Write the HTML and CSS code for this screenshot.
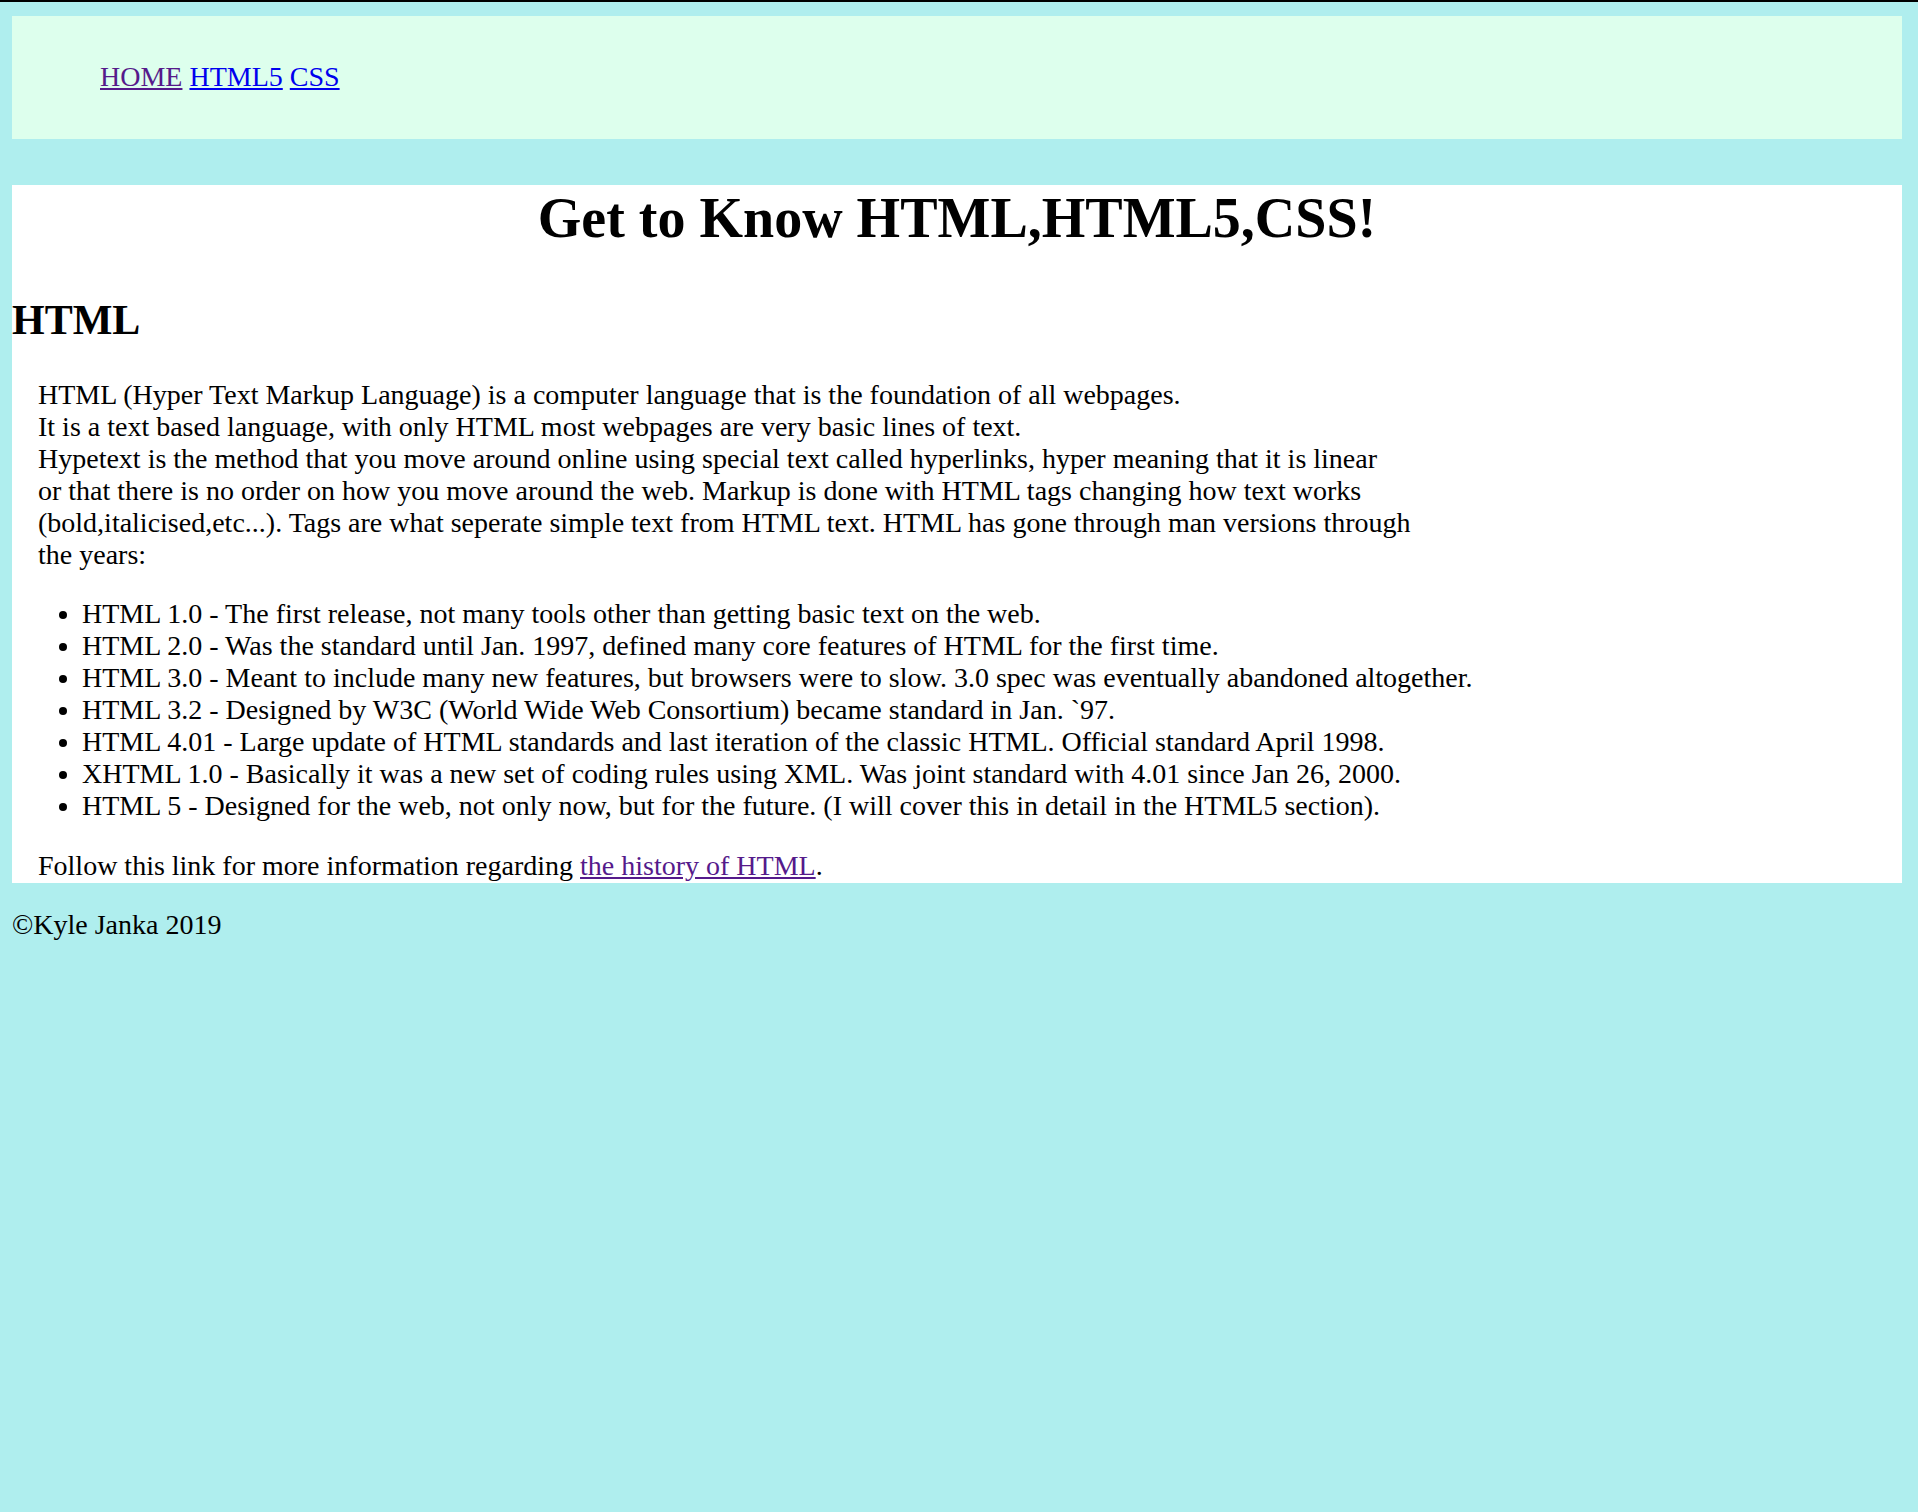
FILE: index.html
```html
<!DOCTYPE html>
<html>
<head>
<meta charset="utf-8">
<title>Get to Know HTML</title>
<link rel="stylesheet" href="styles.css">
</head>
<body>
<div class="page">
  <header class="top">
    <nav class="nav"><a class="visited" href="#">HOME</a> <a href="#">HTML5</a> <a href="#">CSS</a></nav>
  </header>
  <main class="main">
    <h1 class="title">Get to Know HTML,HTML5,CSS!</h1>
    <h2 class="section">HTML</h2>
    <p class="text">HTML (Hyper Text Markup Language) is a computer language that is the foundation of all webpages.<br>
    It is a text based language, with only HTML most webpages are very basic lines of text.<br>
    Hypetext is the method that you move around online using special text called hyperlinks, hyper meaning that it is linear<br>
    or that there is no order on how you move around the web. Markup is done with HTML tags changing how text works<br>
    (bold,italicised,etc...). Tags are what seperate simple text from HTML text. HTML has gone through man versions through<br>
    the years:</p>
    <ul class="list">
      <li>HTML 1.0 - The first release, not many tools other than getting basic text on the web.</li>
      <li>HTML 2.0 - Was the standard until Jan. 1997, defined many core features of HTML for the first time.</li>
      <li>HTML 3.0 - Meant to include many new features, but browsers were to slow. 3.0 spec was eventually abandoned altogether.</li>
      <li>HTML 3.2 - Designed by W3C (World Wide Web Consortium) became standard in Jan. `97.</li>
      <li>HTML 4.01 - Large update of HTML standards and last iteration of the classic HTML. Official standard April 1998.</li>
      <li>XHTML 1.0 - Basically it was a new set of coding rules using XML. Was joint standard with 4.01 since Jan 26, 2000.</li>
      <li>HTML 5 - Designed for the web, not only now, but for the future. (I will cover this in detail in the HTML5 section).</li>
    </ul>
    <p class="text follow">Follow this link for more information regarding <a class="visited" href="#">the history of HTML</a>.</p>
  </main>
  <footer class="foot">&copy;Kyle Janka 2019</footer>
</div>
</body>
</html>
```
FILE: styles.css
```css
html, body {
  margin: 0;
  padding: 0;
}
body {
  background: #afeeee;
  border-top: 2px solid #000;
  font-family: "Liberation Serif", "Times New Roman", serif;
  font-size: 28px;
  line-height: 32px;
  color: #000;
}
.page {
  padding: 14px 16px 40px 12px;
}
.top {
  background: #ddffed;
  height: 123px;
  box-sizing: border-box;
  padding: 45px 0 0 88px;
}
.nav a {
  color: #0000ee;
}
.nav a.visited,
a.visited {
  color: #551a8b;
}
.main {
  background: #fff;
  margin-top: 46px;
  padding: 1px 0 0 0;
}
.title {
  margin: 1px 0 0 0;
  font-size: 56px;
  line-height: 62px;
  text-align: center;
  font-weight: bold;
}
.section {
  margin: 48px 0 0 0;
  font-size: 42px;
  line-height: 47px;
  font-weight: bold;
}
.text {
  margin: 35px 0 0 26px;
}
.list {
  margin: 27px 0 0 0;
  padding-left: 70px;
}
.follow {
  margin-top: 28px;
  margin-bottom: 0;
  padding-bottom: 1px;
}
.foot {
  margin-top: 26px;
}
```
